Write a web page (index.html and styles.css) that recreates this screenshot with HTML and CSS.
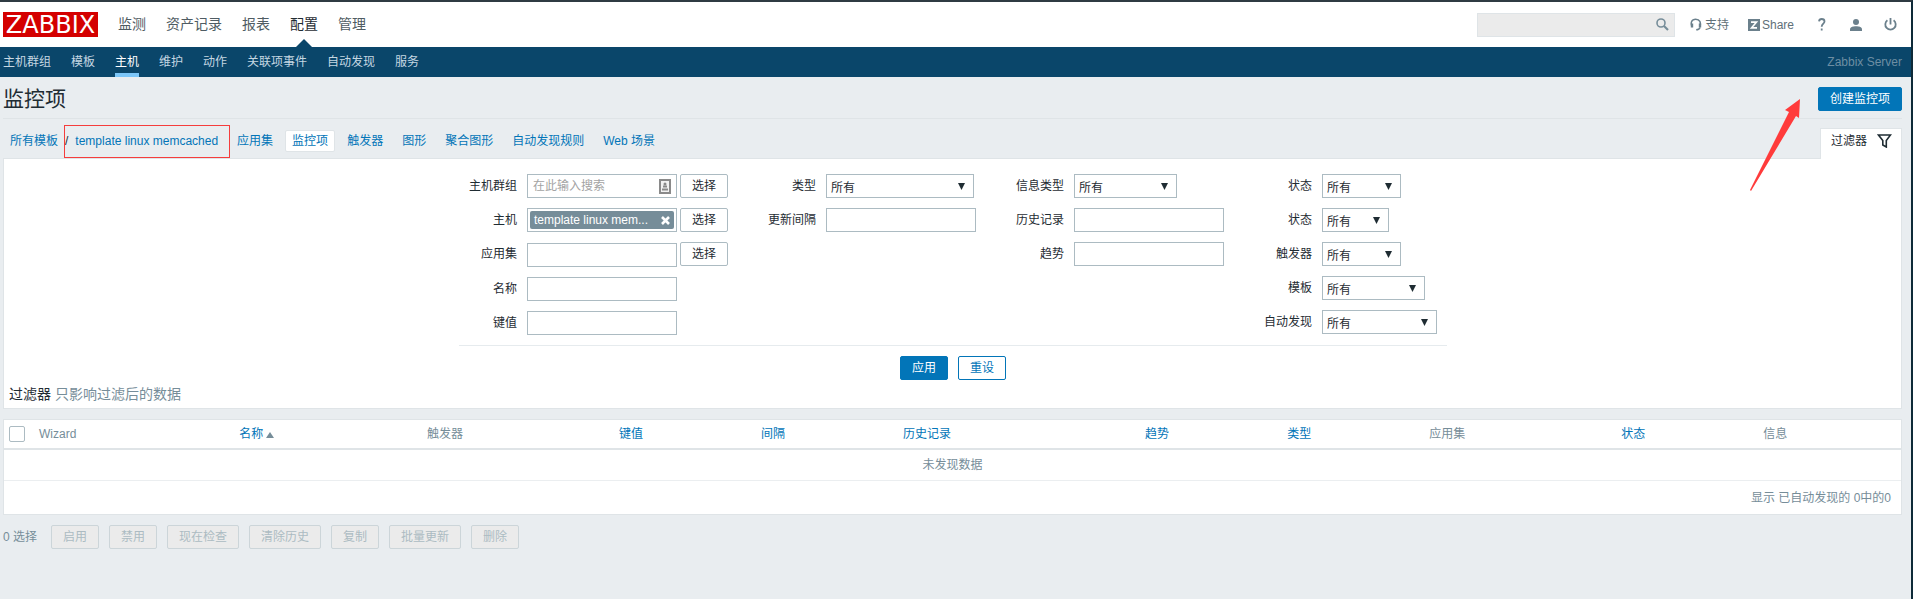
FILE: index.html
```html
<!DOCTYPE html>
<html lang="zh-CN">
<head>
<meta charset="utf-8">
<title>监控项</title>
<link rel="stylesheet" href="styles.css">
</head>
<body>
<header class="top">
  <a class="logo" href="#">ZABBIX</a>
  <nav class="main-menu">
    <a href="#">监测</a>
    <a href="#">资产记录</a>
    <a href="#">报表</a>
    <a href="#" class="selected">配置</a>
    <a href="#">管理</a>
  </nav>
  <form class="search">
    <input type="text" aria-label="搜索">
    <button type="button" aria-label="搜索">
      <svg width="13" height="13" viewBox="0 0 13 13" fill="none" stroke="currentColor"><circle cx="5" cy="5" r="4" stroke-width="1.6"/><path d="M8 8l4 4" stroke-width="2.2"/></svg>
    </button>
  </form>
  <div class="tools">
    <a href="#" class="tool"><svg width="12" height="13" viewBox="0 0 12 13" fill="none" stroke="currentColor"><path d="M2 8.5C.4 5 1.4 1.2 5.7 1.2S11 4.600 10 8.500" stroke-width="1.5"/><path d="M2 5.500v4M10 5.500v4" stroke-width="2.400"/><path d="M10 9.500c-.5 1.700-1.600 2.300-3.800 2.300" stroke-width="1.400"/></svg>支持</a>
    <a href="#" class="tool share"><svg width="12" height="12" viewBox="0 0 12 12"><path fill="currentColor" d="M0 0h12v12H0z"/><path d="M3 3.200h5.400L3.600 8.800H9" fill="none" stroke="#fff" stroke-width="1.700"/></svg>Share</a>
    <a href="#" class="tool icon" aria-label="帮助"><svg width="8" height="13" viewBox="0 0 8 13" fill="none" stroke="currentColor" stroke-width="1.800"><path d="M1 3.400C1.200 1.600 2.200 1 3.700 1 5.400 1 6.500 1.900 6.500 3.400 6.500 5.500 3.700 5.700 3.700 8.700M3.700 10.400v2"/></svg></a>
    <a href="#" class="tool icon" aria-label="用户"><svg width="12" height="12" viewBox="0 0 12 12" fill="currentColor"><circle cx="6" cy="3" r="3"/><path d="M0 12V10.500C0 8 3 7.300 6 7.300s6 .7 6 3.200V12z"/></svg></a>
    <a href="#" class="tool power" aria-label="退出"><svg width="13" height="13" viewBox="0 0 13 13" fill="none" stroke="currentColor" stroke-width="1.800"><path d="M3.400 2.300a5.200 5.200 0 1 0 6.200 0M6.500 0v6.500"/></svg></a>
  </div>
</header>
<nav class="sub-menu">
  <a href="#">主机群组</a>
  <a href="#">模板</a>
  <a href="#" class="selected">主机</a>
  <a href="#">维护</a>
  <a href="#">动作</a>
  <a href="#">关联项事件</a>
  <a href="#">自动发现</a>
  <a href="#">服务</a>
  <span class="server">Zabbix Server</span>
</nav>
<main class="content">
  <div class="title-bar">
    <h1>监控项</h1>
    <button type="button" class="btn primary">创建监控项</button>
  </div>
  <div class="nav-row">
    <nav class="crumbs">
      <a href="#">所有模板</a>
      <span class="slash">/</span>
      <a href="#" class="marked">template linux memcached</a>
      <a href="#">应用集</a>
      <a href="#" class="selected">监控项</a>
      <a href="#">触发器</a>
      <a href="#">图形</a>
      <a href="#">聚合图形</a>
      <a href="#">自动发现规则</a>
      <a href="#">Web 场景</a>
    </nav>
    <a href="#" class="filter-tab">过滤器
      <svg width="15" height="14" viewBox="0 0 15 14" fill="none" stroke="currentColor" stroke-width="1.600"><path d="M1.500 1h12L9.300 6.500V13L5.800 11V6.500z"/></svg>
    </a>
  </div>
  <form class="filter">
    <div class="filter-grid">
      <div class="col first">
        <div class="field"><label for="groups">主机群组</label>
          <div class="box"><input id="groups" type="text" placeholder="在此输入搜索">
            <svg class="card" width="12" height="15" viewBox="0 0 12 15"><rect x="1" y="1" width="10" height="13" fill="#f2f2f2" stroke="#8a8a8a" stroke-width="2"/><circle cx="6" cy="5" r="1.500" fill="#8a8a8a"/><path d="M4 6.500h4v2H4zM3 9.500h6v2H3z" fill="#8a8a8a"/></svg>
          </div>
          <button type="button" class="btn grey">选择</button></div>
        <div class="field"><label for="hosts">主机</label>
          <div class="box"><div class="tag"><span>template linux mem...</span>
            <button id="hosts" type="button" aria-label="移除"><svg width="9" height="9" viewBox="0 0 9 9"><path d="M1 1l7 7M8 1L1 8" stroke="#fff" stroke-width="2.600"/></svg></button></div></div>
          <button type="button" class="btn grey">选择</button></div>
        <div class="field tall"><label for="app">应用集</label><input id="app" class="box" type="text"><button type="button" class="btn grey">选择</button></div>
        <div class="field"><label for="name">名称</label><input id="name" class="box" type="text"></div>
        <div class="field"><label for="key">键值</label><input id="key" class="box" type="text"></div>
      </div>
      <div class="col">
        <div class="field"><label for="type">类型</label><span class="pick w148"><select id="type"><option>所有</option></select></span></div>
        <div class="field"><label for="delay">更新间隔</label><input id="delay" class="box" type="text"></div>
      </div>
      <div class="col">
        <div class="field"><label for="info">信息类型</label><span class="pick w103"><select id="info"><option>所有</option></select></span></div>
        <div class="field"><label for="history">历史记录</label><input id="history" class="box" type="text"></div>
        <div class="field"><label for="trends">趋势</label><input id="trends" class="box" type="text"></div>
      </div>
      <div class="col">
        <div class="field"><label for="state">状态</label><span class="pick w79"><select id="state"><option>所有</option></select></span></div>
        <div class="field"><label for="status">状态</label><span class="pick w67"><select id="status"><option>所有</option></select></span></div>
        <div class="field"><label for="triggers">触发器</label><span class="pick w79"><select id="triggers"><option>所有</option></select></span></div>
        <div class="field"><label for="templates">模板</label><span class="pick w103"><select id="templates"><option>所有</option></select></span></div>
        <div class="field"><label for="discovery">自动发现</label><span class="pick w115"><select id="discovery"><option>所有</option></select></span></div>
      </div>
    </div>
    <div class="filter-buttons">
      <button type="button" class="btn primary">应用</button>
      <button type="button" class="btn outline">重设</button>
    </div>
    <p class="filter-note"><strong>过滤器</strong> 只影响过滤后的数据</p>
  </form>
  <table class="items">
    <colgroup><col class="c-check"><col class="c-wizard"><col class="c-name"><col class="c-trigger"><col class="c-small"><col class="c-small"><col class="c-history"><col class="c-small"><col class="c-small"><col class="c-trigger"><col class="c-small"><col></colgroup>
    <thead>
      <tr>
        <th><input type="checkbox" aria-label="全选"></th>
        <th>Wizard</th>
        <th><a href="#">名称<span class="sort"></span></a></th>
        <th>触发器</th>
        <th><a href="#">键值</a></th>
        <th><a href="#">间隔</a></th>
        <th><a href="#">历史记录</a></th>
        <th><a href="#">趋势</a></th>
        <th><a href="#">类型</a></th>
        <th>应用集</th>
        <th><a href="#">状态</a></th>
        <th>信息</th>
      </tr>
    </thead>
    <tbody>
      <tr><td colspan="12" class="empty">未发现数据</td></tr>
    </tbody>
    <tfoot>
      <tr><td colspan="12" class="total">显示 已自动发现的 0中的0</td></tr>
    </tfoot>
  </table>
  <div class="actions">
    <span class="count">0 选择</span>
    <button type="button" class="btn" disabled>启用</button>
    <button type="button" class="btn" disabled>禁用</button>
    <button type="button" class="btn" disabled>现在检查</button>
    <button type="button" class="btn" disabled>清除历史</button>
    <button type="button" class="btn" disabled>复制</button>
    <button type="button" class="btn" disabled>批量更新</button>
    <button type="button" class="btn" disabled>删除</button>
  </div>
</main>
<svg class="arrow" width="52" height="94" viewBox="0 0 52 94"><path d="M51 1L36 12l4 2L1 92l1 1L47 18l3 2z" fill="#ff3b3b"/></svg>
<div class="edge-mark"></div>
</body>
</html>
```
FILE: styles.css
```css
* { box-sizing: border-box; }
body {
  position: relative;
  margin: 0;
  min-height: 100vh;
  border-top: 2px solid #2f3b43;
  border-right: 2px solid #0e2a38;
  background: #e9edf0;
  color: #1f2c33;
  font: 12px/16px "Liberation Sans", "Noto Sans CJK SC", sans-serif;
}
a { color: #0275b8; text-decoration: none; }
input, select, button { font: inherit; color: inherit; margin: 0; }
svg { display: block; flex: none; }

.top {
  display: flex;
  align-items: center;
  height: 45px;
  padding: 0 14px 0 3px;
  background: #fff;
}
.logo {
  width: 95px;
  height: 25px;
  background: #d40000;
  color: #fff;
  font: 24px/27px "DejaVu Sans", sans-serif;
  text-align: center;
}
.main-menu {
  display: flex;
  align-self: stretch;
  gap: 20px;
  margin: 0 auto 0 20px;
  font-size: 14px;
  line-height: 45px;
}
.main-menu a { position: relative; color: #4f5c63; }
.main-menu .selected { color: #1f2c33; }
.main-menu .selected::after {
  content: "";
  position: absolute;
  left: 50%;
  bottom: 0;
  margin-left: -8px;
  border: 8px solid transparent;
  border-top: 0;
  border-bottom-color: #0a466a;
}
.search {
  display: flex;
  align-items: center;
  width: 198px;
  height: 24px;
  border: 1px solid #dfe4e7;
  background: #ebebeb;
}
.search input { flex: 1; min-width: 0; border: 0; background: none; outline: 0; }
.search button { padding: 0 5px; border: 0; background: none; color: #768d99; }
.tools { display: flex; align-items: center; margin-left: 15px; }
.tool { display: flex; align-items: center; gap: 3px; color: #5f7078; }
.tool svg { color: #6b808c; }
.tool.share { margin-left: 19px; gap: 2px; }
.tool.icon { margin-left: 24px; }
.tool.power { margin-left: 22px; }

.sub-menu {
  display: flex;
  gap: 20px;
  height: 30px;
  padding: 0 9px 0 3px;
  background: #0a466a;
  line-height: 30px;
}
.sub-menu a { color: #c5d7e2; }
.sub-menu .selected { color: #fff; border-bottom: 4px solid #7cc6f8; }
.server { margin-left: auto; color: #6d8ea3; }

.content { padding: 0 9px 0 3px; }
.title-bar {
  display: flex;
  align-items: center;
  justify-content: space-between;
  height: 42px;
  padding-top: 2px;
  border-bottom: 1px solid #dfe4e7;
}
h1 { margin: 0; font-size: 21px; font-weight: 400; line-height: 28px; }
.btn {
  height: 24px;
  padding: 0 11px;
  border: 1px solid #acbbc2;
  border-radius: 2px;
  background: #fff;
  line-height: 20px;
}
.primary { border-color: #0275b8; background: #0275b8; color: #fff; }
.outline { border-color: #0275b8; color: #0275b8; }
.grey { margin-left: 3px; }
.btn:disabled { border-color: #ccd5d9; background: #ebebeb; color: #acbbc2; }

.nav-row { display: flex; justify-content: space-between; align-items: flex-end; height: 39px; }
.crumbs { display: flex; align-items: center; gap: 5px; height: 34px; }
.crumbs a { padding: 2px 6px; border: 1px solid transparent; line-height: 16px; }
.crumbs .slash { margin-right: -5px; margin-left: -5px; }
.crumbs .selected { border-color: #dfe4e7; border-radius: 2px; background: #fff; }
.crumbs .marked { position: relative; }
.crumbs .marked::after {
  content: "";
  position: absolute;
  inset: -6px -6px -7px -5px;
  border: 1px solid #f53d3d;
}
.filter-tab {
  position: relative;
  display: flex;
  align-items: center;
  gap: 10px;
  height: 31px;
  margin-bottom: -1px;
  padding: 0 9px 6px 10px;
  border: 1px solid #dfe4e7;
  border-bottom: 0;
  background: #fff;
  color: #1f2c33;
}

.filter { padding: 15px 4px 4px 5px; border: 1px solid #dfe4e7; background: #fff; }
.filter-grid {
  display: grid;
  grid-template-columns: 269px 248px 248px 223px;
  justify-content: center;
  width: max-content;
  margin: 0 auto;
  padding-bottom: 10px;
  border-bottom: 1px solid #e6ebee;
}
.col { display: flex; flex-direction: column; gap: 10px; }
.field { display: flex; align-items: center; height: 24px; }
.field label { width: 88px; margin-right: 10px; text-align: right; }
.first label { width: 58px; }
.tall { align-items: flex-start; height: 25px; }
.tall label { line-height: 24px; }
.tall .box { align-self: flex-end; }
.box {
  position: relative;
  display: flex;
  flex: none;
  width: 150px;
  height: 24px;
  border: 1px solid #acbbc2;
  border-radius: 0;
  background: #fff;
}
.box input { width: 100%; padding: 0 5px; border: 0; background: none; }
.box input::placeholder { color: #a3a3a3; }
.card { position: absolute; right: 5px; top: 4px; }
.tag {
  display: flex;
  flex: 1;
  align-items: center;
  justify-content: space-between;
  margin: 2px;
  padding: 0 4px;
  border-radius: 2px;
  background: #768d99;
  color: #fff;
}
.tag button { padding: 0; border: 0; background: none; }
.pick { position: relative; }
.pick::after {
  content: "";
  position: absolute;
  right: 9px;
  top: 9px;
  width: 7px;
  height: 7px;
  background: #1f2c33;
  clip-path: polygon(0 0, 100% 0, 50% 100%);
  pointer-events: none;
}
.pick select {
  display: block;
  width: 100%;
  height: 24px;
  padding: 3px 4px 0;
  border: 1px solid #acbbc2;
  border-radius: 0;
  background: #fff;
  appearance: none;
}
.w67 { width: 67px; }
.w79 { width: 79px; }
.w103 { width: 103px; }
.w115 { width: 115px; }
.w148 { width: 148px; }
.filter-buttons { display: flex; justify-content: center; gap: 10px; padding: 10px 0 4px; }
.filter-note { margin: 0; padding-left: 0; color: #768d99; font-size: 14px; line-height: 20px; }
.filter-note strong { color: #1f2c33; font-weight: 400; }

.items {
  width: 100%;
  margin-top: 10px;
  border: 1px solid #dfe4e7;
  border-spacing: 0;
  background: #fff;
  color: #768d99;
  table-layout: fixed;
}
.items th { height: 30px; padding: 0 5px; border-bottom: 2px solid #dfe4e7; font-weight: 400; text-align: left; }
.items td { padding: 0 10px; }
.items .empty { height: 31px; border-bottom: 1px solid #ebeef0; text-align: center; }
.items .total { height: 33px; text-align: right; }
.c-check { width: 30px; }
.c-wizard { width: 10.55%; }
.c-name { width: 9.9%; }
.c-trigger { width: 10.12%; }
.c-small { width: 7.49%; }
.c-history { width: 12.76%; }
.items input {
  display: block;
  width: 16px;
  height: 16px;
  border: 1px solid #acbbc2;
  border-radius: 2px;
  background: #fff;
  appearance: none;
}
.sort {
  display: inline-block;
  margin-left: 3px;
  border: 4px solid transparent;
  border-top: 0;
  border-bottom: 6px solid #768d99;
}

.actions { display: flex; align-items: center; gap: 10px; margin-top: 10px; }
.count { margin-right: 4px; color: #768d99; }

.arrow { position: absolute; right: 110px; top: 96px; pointer-events: none; }
.edge-mark { position: absolute; right: -2px; top: 68px; width: 2px; height: 38px; background: #0a5a9c; }
```
